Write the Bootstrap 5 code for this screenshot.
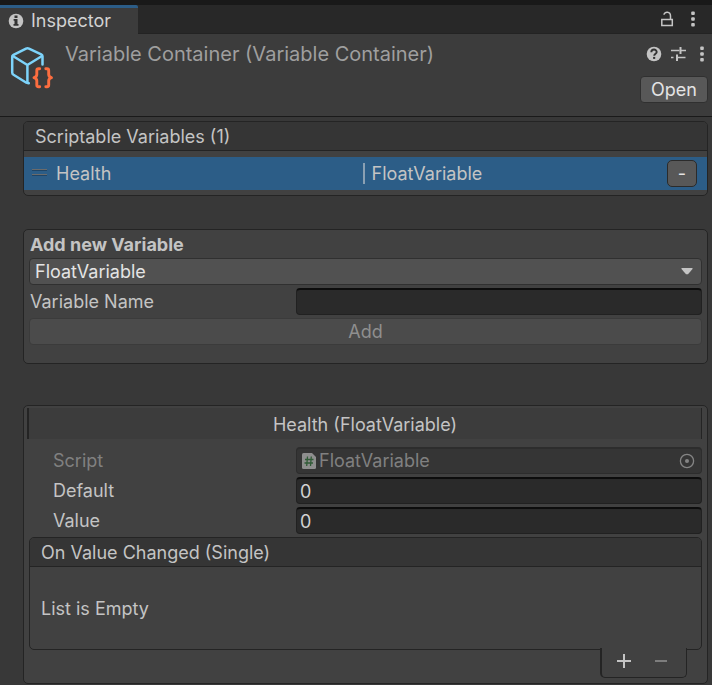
<!DOCTYPE html>
<html lang="en" data-bs-theme="dark">
<head>
<meta charset="utf-8">
<meta name="viewport" content="width=device-width, initial-scale=1">
<title>Inspector</title>
<link href="https://cdn.jsdelivr.net/npm/bootstrap@5.3.0/dist/css/bootstrap.min.css" rel="stylesheet">
<style>
  body { font-family: Inter, "Liberation Sans", sans-serif; font-size: 18px; line-height: 24px; background: #383838; color: #c4c4c4; }
  h1, h2, h3 { color: inherit; }
  svg { display: block; flex: none; }
  .btn { font-size: 18px; line-height: 24px; }
  .tab-strip { background: #282828; border-top: 5px solid #191919; height: 34px; }
  .dock-tab { background: #3c3c3c; border-top: 3px solid #2c5d87; color: #d2d2d2; width: 138px; padding: 0 8px; gap: 7px; border-radius: 0 2px 0 0; text-decoration: none; }
  .strip-rest { border-bottom: 1px solid #232323; padding-right: 13px; gap: 13px; }
  .icon-btn { background: none; border: 0; padding: 0; color: #c4c4c4; }
  .asset-head { background: #3c3c3c; border-bottom: 1px solid #1a1a1a; height: 83px; padding: 8px 4px 0 10px; }
  .asset-icon { margin-top: 1px; }
  .asset-title { font-size: 20px; color: #9f9f9f; margin: 0; font-weight: 400; line-height: 24px; padding-left: 11px; }
  .asset-tools { gap: 9px; height: 24px; }
  .unity-btn { background: #585858; border: 1px solid #303030; border-radius: 4px; color: #e4e4e4; padding: 0 8px; }
  .open-btn { height: 27px; width: 68px; margin-top: 10px; }
  .inspector-body { padding: 4px 4px 0 23px; }
  .panel { background: #414141; border: 1px solid #242424; border-radius: 5px; }
  .panel-title { background: #353535; border-bottom: 1px solid #242424; border-radius: 4px 4px 0 0; padding: 2px 11px 0; height: 29px; font-size: 18px; margin: 0; font-weight: 400; line-height: 26px; }
  .variable-row { background: #2c5d87; height: 33px; margin: 6px 0 5px; padding-right: 10px; }
  .drag-handle { width: 15px; height: 6px; margin: 0 9px 3px 8px; border-top: 1px solid #6b6b6b; border-bottom: 1px solid #6b6b6b; box-shadow: inset 0 1px #1f4567, 0 1px #1f4567; }
  .variable-type { border-left: 2px solid #8aa0b3; line-height: 21px; padding-left: 7px; margin-left: 2px; }
  .remove-btn { width: 30px; height: 27px; padding: 0; border-color: #2b2b2b; border-radius: 5px; }
  .add-panel { margin-top: 33px; padding: 3px 5px 18px; }
  .add-title { font-size: 18px; line-height: 24px; font-weight: 700; margin: 0 0 1px; padding: 0 1px; }
  .fields { display: grid; gap: 3px; }
  .unity-select { background: #515151; border: 1px solid #303030; border-radius: 4px; color: #e4e4e4; padding: 0 5px; height: 27px; width: 100%; appearance: none; }
  .select-arrow { right: 9px; top: 10px; pointer-events: none; }
  .field-label { width: 267px; padding-left: 1px; }
  .unity-input { background: #2a2a2a; border: 1px solid #212121; border-top: 2px solid #0d0d0d; border-radius: 4px; color: #d2d2d2; padding: 0 3px; height: 27px; min-width: 0; }
  .unity-input:focus, .unity-select:focus { outline: 0; border-color: #3a79bb; }
  .unity-btn:disabled { background: #4b4b4b; border-color: #3b3b3b; color: #8f8f8f; opacity: 1; height: 27px; width: 100%; padding: 0; line-height: 24px; }
  .detail-panel { margin-top: 41px; padding: 2px 5px 5px; }
  .detail-title { background: #3c3c3c; border: solid #242424; border-width: 0 1px 0 2px; margin: 0 0 8px -2px; height: 31px; line-height: 34px; font-size: 18px; font-weight: 400; text-align: center; }
  .detail-panel .field-label { padding-left: 24px; }
  .object-field { background: #353535; border: 1px solid #2d2d2d; border-top-width: 2px; border-radius: 4px; color: #808080; height: 27px; padding: 0 6px 0 5px; gap: 3px; }
  .muted-text { color: #808080; }
  .event-list { margin-top: 3px; }
  .empty-note { padding: 30px 11px 28px; }
  .list-footer { background: #414141; border: 1px solid #242424; border-left-width: 2px; border-top: 0; border-radius: 0 0 5px 5px; width: 87px; height: 30px; margin: -2px 15px 0 auto; padding: 0 19px 3px 14px; position: relative; }
</style>
<script src="https://cdn.jsdelivr.net/npm/bootstrap@5.3.0/dist/js/bootstrap.bundle.min.js"></script>
</head>
<body>
<nav class="tab-strip d-flex" aria-label="Dock">
  <a href="#inspector" class="dock-tab d-flex align-items-center">
    <svg width="16" height="16" viewBox="0 0 16 16"><circle cx="8" cy="8" r="7.3" fill="#c4c4c4"/><path d="M6.500 2.500h3v2.400h-3zM5.600 6h3.900v5h1v1.800H5.500V11h1V7.700h-.9z" fill="#333"/></svg>
    <span>Inspector</span>
  </a>
  <div class="strip-rest d-flex flex-grow-1 align-items-center justify-content-end">
    <button class="icon-btn" aria-label="Lock"><svg width="14" height="16" viewBox="0 0 14 16" fill="none" stroke="currentColor" stroke-width="1.5"><path d="M1.800 8.500h10.500v6H1.800zM10.500 8V5C10.500.2 4.300.2 4 3.800"/></svg></button>
    <button class="icon-btn" aria-label="Tab menu"><svg width="12" height="16" viewBox="0 0 12 16" fill="currentColor"><rect x="4.200" y="0.500" width="3.600" height="3.600" rx="1"/><rect x="4.200" y="6.200" width="3.600" height="3.600" rx="1"/><rect x="4.200" y="11.900" width="3.600" height="3.600" rx="1"/></svg></button>
  </div>
</nav>

<header class="asset-head d-flex align-items-start">
  <svg class="asset-icon" width="44" height="48" viewBox="0 0 44 48" fill="none" stroke-linejoin="round" stroke-linecap="round">
    <g stroke="#7dd3fa" stroke-width="2.500"><path d="M32.500 21.500V13.500Q32.500 12 31.200 11.300L19 5.600Q17.500 5 16 5.600L3.500 11.800Q2.200 12.500 2.200 14V29.500Q2.200 31 3.500 31.800L16 39.500L18.800 40.200"/><path d="M2.800 13L17.400 22L32 13M17.400 22V39"/></g>
    <g stroke="#fc6d3f" stroke-width="2.900"><path d="M29.700 25.700h-1.200q-1.700 0-1.700 1.700v4q0 2.400-2.800 3.200q2.800.8 2.800 3.200v4.200q0 1.700 1.700 1.700h1.200M35.800 25.700h1.200q1.700 0 1.700 1.700v4q0 2.400 2.800 3.200q-2.800.8-2.800 3.200v4.200q0 1.700-1.700 1.700h-1.200"/></g>
  </svg>
  <h1 class="asset-title flex-grow-1">Variable Container (Variable Container)</h1>
  <div class="d-flex flex-column align-items-end">
    <div class="asset-tools d-flex align-items-center">
      <button class="icon-btn" aria-label="Help"><svg width="16" height="16" viewBox="0 0 16 16"><circle cx="8" cy="8" r="7.300" fill="#c4c4c4"/><path d="M5.300 6.200C5.300 2.700 10.700 2.700 10.700 6C10.700 7.800 8.200 7.700 8.200 9.800" fill="none" stroke="#333" stroke-width="1.900"/><rect x="7.100" y="10.900" width="2.100" height="2" fill="#333"/></svg></button>
      <button class="icon-btn" aria-label="Presets"><svg width="16" height="16" viewBox="0 0 16 16" fill="none" stroke="currentColor"><path d="M0 4.500h8.500M10 4.500h5M0 11.500h2.500M5.500 11.500H14.500" stroke-width="1.500"/><path d="M9.500 1v7M6 8.500v6.500" stroke-width="2"/></svg></button>
      <button class="icon-btn" aria-label="Component menu"><svg width="12" height="16" viewBox="0 0 12 16" fill="currentColor"><rect x="4.200" y="0.500" width="3.600" height="3.600" rx="1"/><rect x="4.200" y="6.200" width="3.600" height="3.600" rx="1"/><rect x="4.200" y="11.900" width="3.600" height="3.600" rx="1"/></svg></button>
    </div>
    <button class="btn unity-btn open-btn">Open</button>
  </div>
</header>

<main class="inspector-body" id="inspector">
  <section class="panel">
    <h2 class="panel-title">Scriptable Variables (1)</h2>
    <div class="variable-row d-flex align-items-center">
      <div class="d-flex align-items-center w-50"><span class="drag-handle"></span><span>Health</span></div>
      <div class="variable-type flex-grow-1">FloatVariable</div>
      <button class="btn unity-btn remove-btn" aria-label="Remove Health">-</button>
    </div>
  </section>

  <section class="panel add-panel">
    <h2 class="add-title">Add new Variable</h2>
    <div class="fields">
      <div class="position-relative">
        <select class="unity-select d-block" aria-label="Variable type"><option>FloatVariable</option></select>
        <svg class="select-arrow position-absolute" width="12" height="7" viewBox="0 0 12 7"><path d="M.5 0h11v1L7 6.300H5L.5 1z" fill="#c4c4c4"/></svg>
      </div>
      <div class="d-flex align-items-center">
        <label class="field-label" for="variable-name">Variable Name</label>
        <input class="unity-input flex-grow-1" id="variable-name" type="text">
      </div>
      <button class="btn unity-btn" disabled>Add</button>
    </div>
  </section>

  <section class="panel detail-panel">
    <h2 class="detail-title">Health (FloatVariable)</h2>
    <div class="fields">
      <div class="d-flex align-items-center">
        <span class="field-label muted-text">Script</span>
        <div class="object-field d-flex align-items-center flex-grow-1">
          <svg width="14" height="16" viewBox="0 0 14 16"><path d="M1.500 0H10L14 4V14.500Q14 16 12.500 16H1.500Q0 16 0 14.500V1.500Q0 0 1.500 0z" fill="#8e8e8e"/><path d="M5.500 3.500L4.700 13M9.300 3.500L8.500 13M3 6.500h8.500M2.500 10H11" stroke="#315b37" stroke-width="1.300"/></svg>
          <span class="flex-grow-1">FloatVariable</span>
          <svg width="16" height="16" viewBox="0 0 16 16"><circle cx="8" cy="8" r="6.600" fill="none" stroke="#858585" stroke-width="1.300"/><circle cx="8" cy="8" r="2" fill="#858585"/></svg>
        </div>
      </div>
      <div class="d-flex align-items-center">
        <label class="field-label" for="default-value">Default</label>
        <input class="unity-input flex-grow-1" id="default-value" type="text" value="0">
      </div>
      <div class="d-flex align-items-center">
        <label class="field-label" for="current-value">Value</label>
        <input class="unity-input flex-grow-1" id="current-value" type="text" value="0">
      </div>
    </div>
    <div class="panel event-list">
      <h3 class="panel-title">On Value Changed (Single)</h3>
      <div class="empty-note">List is Empty</div>
    </div>
    <div class="list-footer d-flex align-items-center justify-content-between">
      <button class="icon-btn" aria-label="Add entry"><svg width="16" height="16" viewBox="0 0 16 16"><path d="M1 8h14M8 1v14" stroke="#c4c4c4" stroke-width="2"/></svg></button>
      <button class="icon-btn" aria-label="Remove entry" disabled><svg width="12" height="16" viewBox="0 0 12 16"><path d="M0 8h12" stroke="#7d7d7d" stroke-width="2"/></svg></button>
    </div>
  </section>
</main>
</body>
</html>
